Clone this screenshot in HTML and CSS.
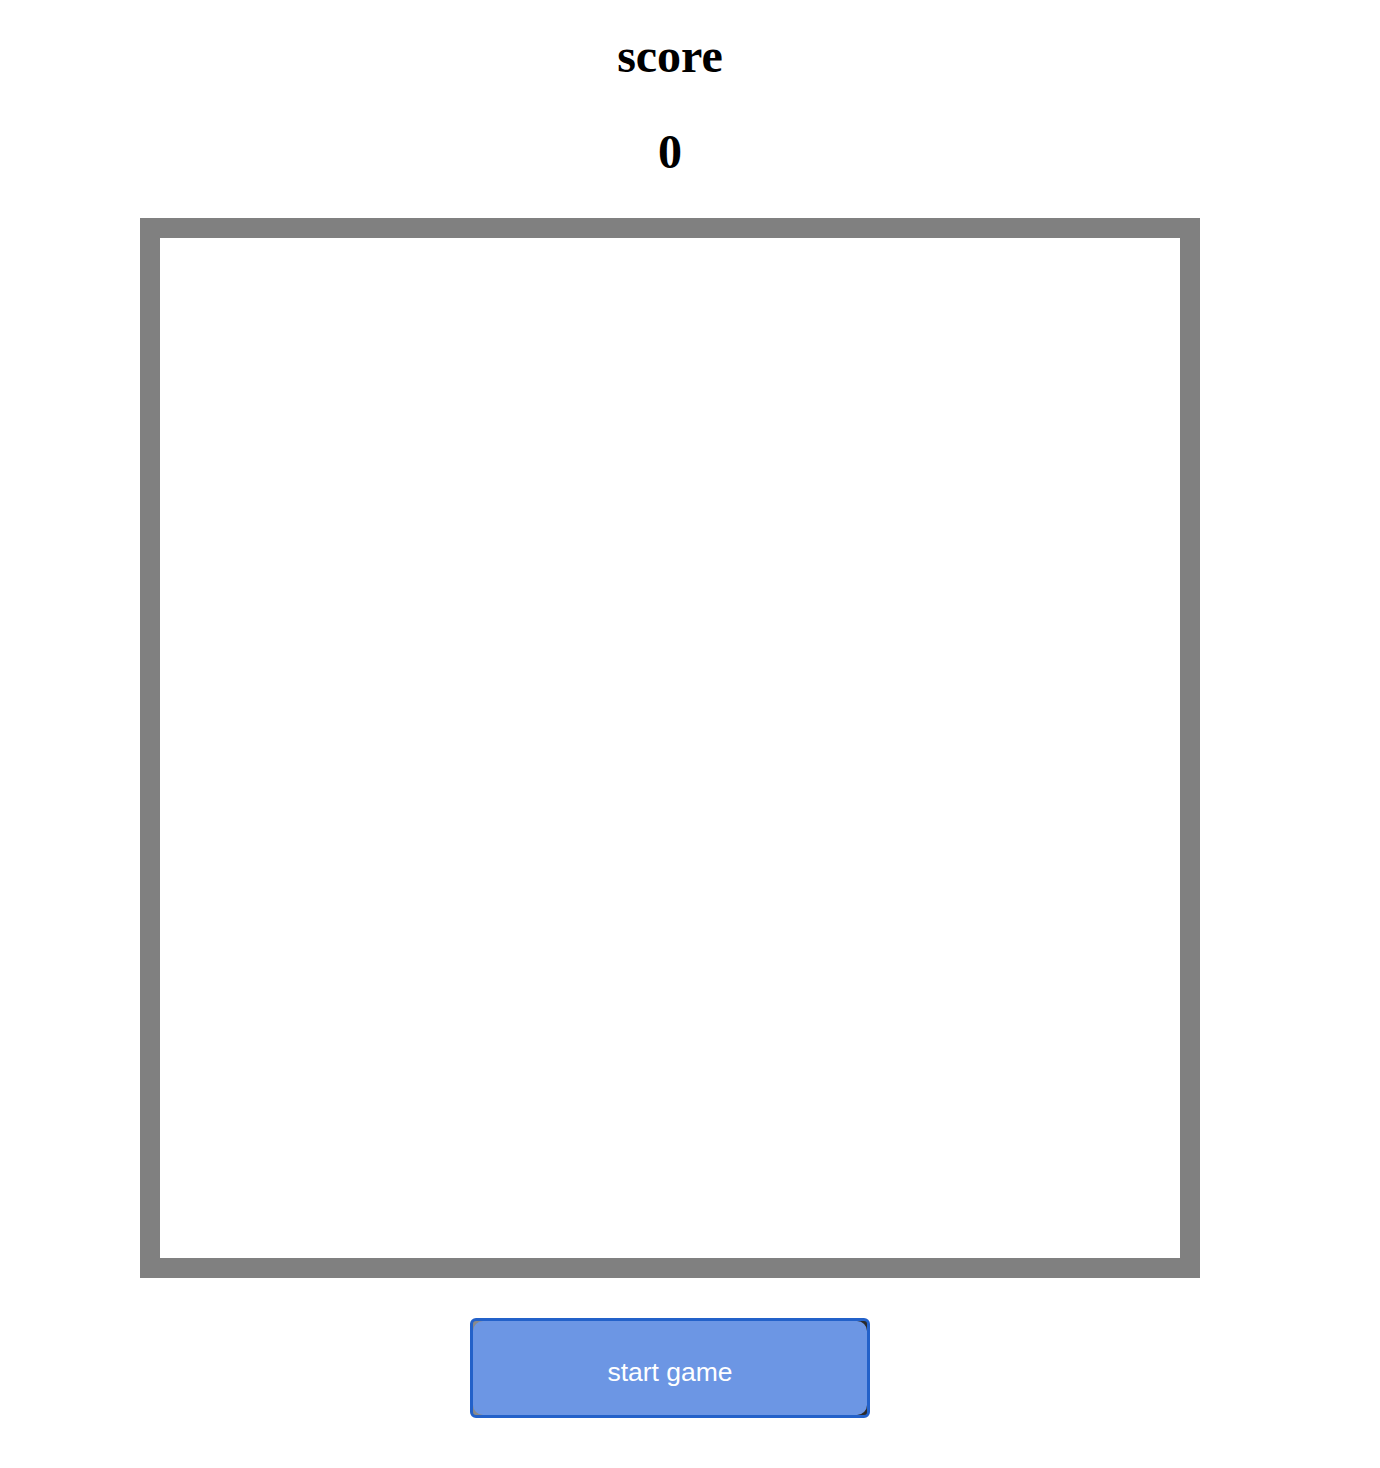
FILE: index.html
```html
<!DOCTYPE html>
<html>
<head>
<meta charset="utf-8">
<link rel="stylesheet" href="styles.css">
</head>
<body>
<div class="game">
  <h1 class="score-label">score</h1>
  <h1 class="score-value">0</h1>
  <div class="board"></div>
  <button class="start-btn"><span class="start-btn-face">start game</span></button>
</div>
</body>
</html>
```
FILE: styles.css
```css
html, body {
  margin: 0;
  padding: 0;
  background: #fff;
}
.game {
  width: 1340px;
  display: flex;
  flex-direction: column;
  align-items: center;
  font-family: "Liberation Serif", "Times New Roman", serif;
}
.score-label,
.score-value {
  font-size: 48px;
  line-height: 55px;
  font-weight: bold;
  margin: 0;
  color: #000;
}
.score-label {
  margin-top: 28px;
}
.score-value {
  margin-top: 41px;
}
.board {
  margin-top: 39px;
  width: 1020px;
  height: 1020px;
  border: 20px solid #808080;
  background: #fff;
}
.start-btn {
  margin-top: 40px;
  width: 400px;
  height: 100px;
  padding: 0;
  border: 3px solid #2361c9;
  border-radius: 6px;
  background: linear-gradient(135deg, #8a8a8a 0 25%, #2a2a2a 25%);
  display: flex;
  cursor: pointer;
}
.start-btn-face {
  flex: 1;
  display: flex;
  align-items: center;
  justify-content: center;
  padding-top: 9px;
  border-radius: 10px;
  background: #6c96e4;
  color: #fff;
  font-family: "Liberation Sans", Arial, sans-serif;
  font-size: 26.5px;
}
```
